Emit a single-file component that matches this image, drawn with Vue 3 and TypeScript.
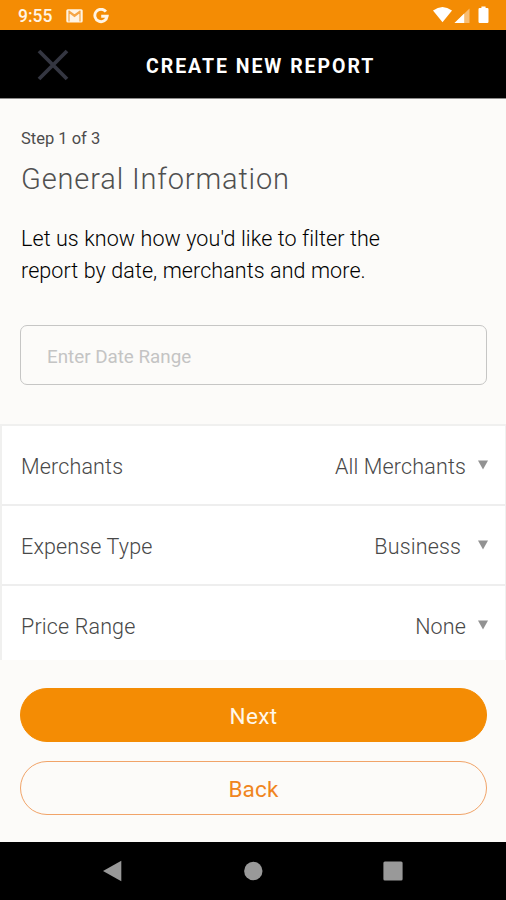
<script setup lang="ts">
interface FilterRow {
  label: string
  value: string
  offset?: boolean
}

const filters: FilterRow[] = [
  { label: 'Merchants', value: 'All Merchants' },
  { label: 'Expense Type', value: 'Business', offset: true },
  { label: 'Price Range', value: 'None' },
]
</script>

<template>
  <div class="screen">
    <div class="status">
      <span class="clock">9:55</span>
      <svg class="mail" width="17" height="14" viewBox="0 0 17 14">
        <rect x="0.3" y="0.3" width="16.4" height="13.2" rx="1.5" fill="#fff4e4" />
        <path d="M3 12.5V3.2l5.5 4.2L14 3.2v9.3M2.6 1.8l5.9 4.3 5.9-4.3" fill="none" stroke="#f5a647" stroke-width="1.2" />
      </svg>
      <svg class="google" width="16" height="16" viewBox="0 0 16 16">
        <path d="M12.9 3.6A6.2 6.2 0 1 0 14.2 8.2H8.2" fill="none" stroke="#fff4e4" stroke-width="2.9" />
      </svg>
      <svg class="signals" width="58" height="18" viewBox="0 0 58 18">
        <path d="M0 4.4Q9.5-2.6 19 4.4L9.5 16.2Z" fill="#fff" />
        <path d="M21.5 17L36.5 2.5V17Z" fill="#f8bd72" />
        <path d="M21.5 17L31.2 7.6V17Z" fill="#fff" />
        <path d="M45.5 3.3q0-1.2 1.2-1.2h1.7V.4h4.2v1.7h1.7q1.2 0 1.2 1.2v12.5q0 1.2-1.2 1.2h-7.6q-1.2 0-1.2-1.2Z" fill="#fff" />
      </svg>
    </div>

    <header class="header">
      <svg class="close" width="32" height="32" viewBox="0 0 32 32">
        <path d="M2 2l28 28M30 2L2 30" stroke="#343641" stroke-width="3.8" />
      </svg>
      <h1 class="title">CREATE NEW REPORT</h1>
    </header>

    <main class="body">
      <section class="intro">
        <p class="step">Step 1 of 3</p>
        <h2 class="heading">General Information</h2>
        <p class="lead">Let us know how you'd like to filter the<br />report by date, merchants and more.</p>
        <div class="date"><span>Enter Date Range</span></div>
      </section>

      <section class="filters">
        <div v-for="row in filters" :key="row.label" class="row">
          <span class="label">{{ row.label }}</span>
          <span class="value" :class="{ offset: row.offset }">{{ row.value }}</span>
          <svg class="caret" width="10" height="10" viewBox="0 0 10 10">
            <path d="M0 0.5H10L5 9.5Z" fill="#929292" />
          </svg>
        </div>
      </section>

      <section class="actions">
        <button class="btn primary">Next</button>
        <button class="btn outline">Back</button>
      </section>
    </main>

    <nav class="navbar">
      <svg width="20" height="22" viewBox="0 0 20 22"><path d="M1 11L19.3 .8V21.2Z" fill="#999" /></svg>
      <svg width="20" height="20" viewBox="0 0 20 20"><circle cx="10.3" cy="10" r="9.2" fill="#999" /></svg>
      <svg width="20" height="20" viewBox="0 0 20 20"><rect x=".4" y=".4" width="19.2" height="19.2" rx="1.5" fill="#999" /></svg>
    </nav>
  </div>
</template>

<style>
body {
  margin: 0;
}
</style>

<style scoped>
.screen {
  width: 506px;
  height: 900px;
  display: flex;
  flex-direction: column;
  overflow: hidden;
  background: #fcfbf9;
  font-family: Roboto, "Liberation Sans", sans-serif;
}
.screen * {
  box-sizing: border-box;
}
p, h1, h2 {
  margin: 0;
}
.status {
  height: 30px;
  flex: none;
  display: flex;
  align-items: flex-start;
  background: #f48c04;
  padding: 0 15px 0 18px;
}
.clock {
  width: 48px;
  font-size: 17.5px;
  line-height: 32px;
  font-weight: 500;
  color: #fff4e4;
}
.mail {
  margin-top: 9px;
}
.google {
  margin: 8px 0 0 10px;
}
.signals {
  margin: 6px 0 0 auto;
}
.header {
  height: 68px;
  flex: none;
  display: flex;
  align-items: center;
  background: #000;
  padding-left: 37px;
}
.close {
  margin-top: 2px;
}
.title {
  margin: 5px 0 0 77px;
  font-size: 19.5px;
  line-height: 24px;
  font-weight: 700;
  letter-spacing: 1.95px;
  color: #fff;
  white-space: nowrap;
}
.body {
  height: 744px;
  flex: none;
  border-top: 1px solid #8d8c8b;
}
.intro {
  height: 325px;
  padding: 29px 19px 0 20px;
}
.step {
  padding-left: 1px;
  font-size: 16.5px;
  line-height: 22px;
  color: #4c4c4c;
}
.heading {
  margin-top: 9px;
  padding-left: 1px;
  font-size: 29px;
  line-height: 40px;
  font-weight: 300;
  letter-spacing: 0.85px;
  color: #505050;
}
.lead {
  margin-top: 24px;
  padding-left: 1px;
  font-size: 21.5px;
  line-height: 32px;
  font-weight: 300;
  letter-spacing: 0.09px;
  color: #000;
  white-space: nowrap;
}
.date {
  margin-top: 38px;
  height: 60px;
  display: flex;
  align-items: center;
  padding: 4px 0 0 26px;
  border: 1.5px solid #c6c6c5;
  border-radius: 7px;
  font-size: 18.8px;
  color: #c4c4c4;
}
.filters {
  height: 236px;
  border: solid #f0f0ef;
  border-width: 2px 1px 0 2px;
  background: #fff;
}
.row {
  height: 80px;
  display: flex;
  align-items: center;
  padding: 2px 17px 0 19px;
  border-bottom: 2px solid #eeeeee;
  font-size: 21.5px;
  font-weight: 300;
  letter-spacing: 0.15px;
  color: #484848;
}
.row:last-child {
  border-bottom-color: transparent;
}
.value {
  margin-left: auto;
}
.offset {
  padding-right: 5px;
}
.caret {
  margin: -3px 0 0 12px;
}
.actions {
  display: flex;
  flex-direction: column;
  gap: 20px;
  padding: 28px 19px 0 20px;
}
.btn {
  height: 54px;
  padding: 2px 0 0;
  border: 1px solid #f48c04;
  border-radius: 27px;
  font-family: inherit;
  font-size: 22.5px;
}
.primary {
  margin-bottom: -1px;
  background: #f48c04;
  color: #fff7ea;
  font-weight: 400;
  letter-spacing: 0.4px;
}
.outline {
  background: transparent;
  border: 1.5px solid #f1a469;
  color: #f08520;
  letter-spacing: 0.2px;
}
.navbar {
  flex: 1;
  display: flex;
  align-items: center;
  justify-content: space-between;
  padding: 0 103px 0 102px;
  background: #000;
}
</style>
